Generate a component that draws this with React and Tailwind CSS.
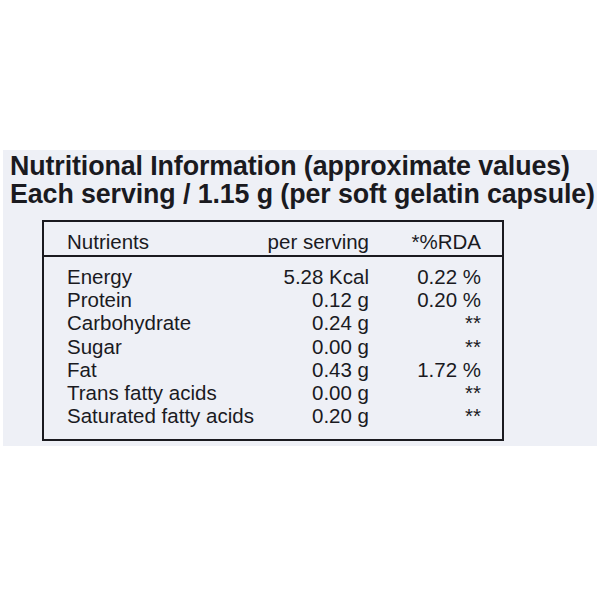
const ROWS = [
  ['Energy', '5.28 Kcal', '0.22 %'],
  ['Protein', '0.12 g', '0.20 %'],
  ['Carbohydrate', '0.24 g', '**'],
  ['Sugar', '0.00 g', '**'],
  ['Fat', '0.43 g', '1.72 %'],
  ['Trans fatty acids', '0.00 g', '**'],
  ['Saturated fatty acids', '0.20 g', '**'],
];

export default function App() {
  return (
    <div className="w-[600px] h-[600px] bg-white pt-[150px] px-[3px] font-['Liberation_Sans',Arial,sans-serif] text-[#1a1a1f]">
      <div className="bg-[#eef0f6] h-[296px] pl-[7px] pt-[2px]">
        <div className="font-bold text-[26.8px] leading-[28px] tracking-[-0.1px]">
          <div>Nutritional Information (approximate values)</div>
          <div>Each serving / 1.15 g (per soft gelatin capsule)</div>
        </div>

        <div className="ml-[32px] mt-[12px] w-[462px] h-[221px] border-2 border-[#1a1a1f] text-[20.5px] leading-[23px]">
          <div className="flex items-center h-[35px] pt-[5px] border-b-2 border-[#1a1a1f] pl-[23px]">
            <span className="w-[195px]">Nutrients</span>
            <span className="w-[107px] text-right">per serving</span>
            <span className="w-[112px] text-right">*%RDA</span>
          </div>
          <div className="pl-[23px] pt-[8px]">
            {ROWS.map(([name, value, rda]) => (
              <div key={name} className="flex h-[23.2px]">
                <span className="w-[195px]">{name}</span>
                <span className="w-[107px] text-right">{value}</span>
                <span className="w-[112px] text-right">{rda}</span>
              </div>
            ))}
          </div>
        </div>
      </div>
    </div>
  );
}
